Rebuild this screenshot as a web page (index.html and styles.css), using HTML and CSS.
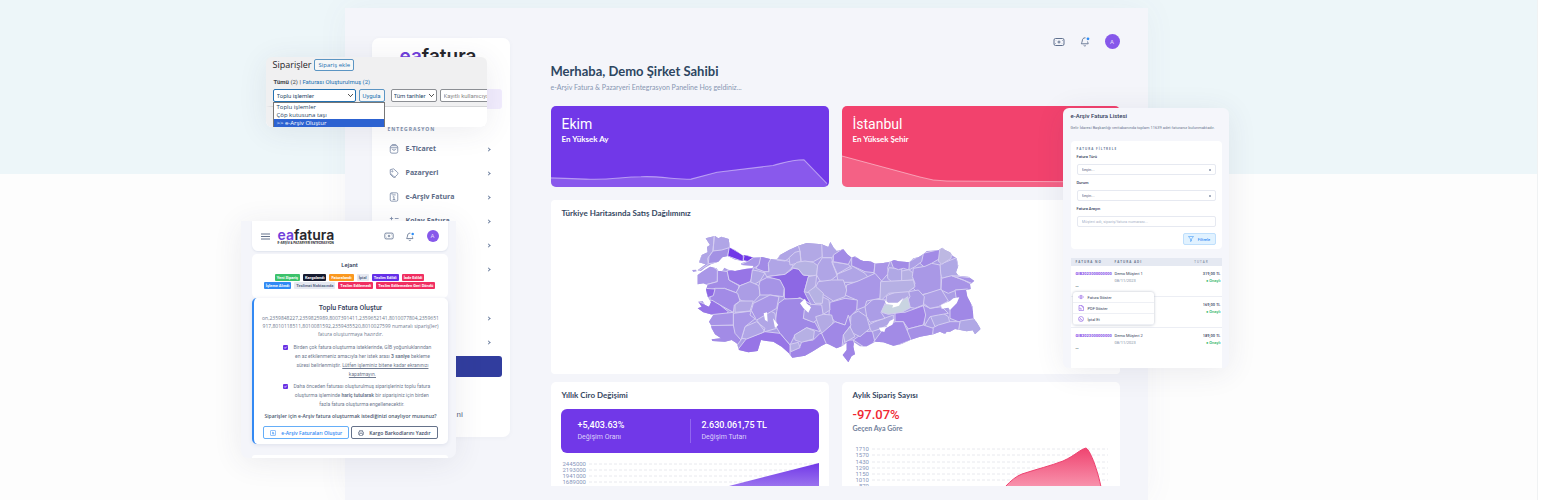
FILE: index.html
```html
<!DOCTYPE html>
<html lang="tr">
<head>
<meta charset="utf-8">
<meta name="viewport" content="width=device-width, initial-scale=1">
<title>eafatura</title>
<link rel="stylesheet" href="styles.css">
</head>
<body>
<svg class="defs" aria-hidden="true">
  <symbol id="i-cash" viewBox="0 0 24 18"><rect x="2" y="2" width="20" height="14" rx="3"/><circle cx="12" cy="9" r="2"/><path d="M6 6v.5M18 11.500v.5M5 12h1M18 6h1"/></symbol>
  <symbol id="i-bell" viewBox="0 0 24 24"><path d="M13 4c-5-.5-7 3-7 7 0 3-2 3.500-2 6h15c0-2-1.500-3-1.500-5M9 20.500c1 1.500 4 1.500 5 0"/><circle class="dot" cx="18.500" cy="6" r="3"/></symbol>
  <symbol id="i-check" viewBox="0 0 12 12"><path d="M3 6l2 2 4-4"/></symbol>
</svg>
<main class="hero">
  <div class="stage">
    <section class="dashboard">
      <aside class="sidebar">
        <div class="logo logo-lg"><span>ea</span>fatura</div>
        <div class="active-item"></div>
        <h2 class="side-head">ENTEGRASYON</h2>
        <nav class="side-nav">
          <a href="#"><svg class="ico" viewBox="0 0 24 24"><rect x="3" y="4" width="18" height="18" rx="4"/><path d="M3 9h18M6 4l2-3h8l2 3M8 12c1 4 7 4 8 0"/></svg><span>E-Ticaret</span><i class="chev"></i></a>
          <a href="#"><svg class="ico" viewBox="0 0 24 24"><path d="M3 4l8-2 9 8c2 2 2 4 0 6l-4 4c-2 2-4 1-5 0l-8-8z"/><circle cx="8" cy="8" r="1.500"/><path d="M2 14l8 8c2 1 4 1 6 0"/></svg><span>Pazaryeri</span><i class="chev"></i></a>
          <a href="#"><svg class="ico" viewBox="0 0 24 24"><rect x="3" y="2" width="18" height="20" rx="3"/><path d="M8 7h8M12 11v7M9 12l3-1M9 18h6M7 2v4"/></svg><span>e-Arşiv Fatura</span><i class="chev"></i></a>
          <a href="#"><svg class="ico" viewBox="0 0 24 24"><path d="M2 6h8M6 2v8M14 6h9M3 15l6 6M9 15l-6 6M14 16h9M14 20h9"/></svg><span>Kolay Fatura</span><i class="chev"></i></a>
          <a href="#" aria-label="Menü"><i class="chev"></i></a>
          <a href="#" aria-label="Menü"><i class="chev"></i></a>
        </nav>
        <nav class="side-nav side-nav-2">
          <a href="#" aria-label="Menü"><i class="chev"></i></a>
          <a href="#" aria-label="Menü"><i class="chev"></i></a>
        </nav>
        <div class="side-cta"></div>
        <p class="side-foot">ni</p>
      </aside>
      <div class="content">
        <header class="topbar">
          <svg class="t-cash"><use href="#i-cash"/></svg>
          <svg class="t-bell"><use href="#i-bell"/></svg>
          <span class="avatar">A</span>
        </header>
        <h1 class="hello">Merhaba, Demo Şirket Sahibi</h1>
        <p class="lead">e-Arşiv Fatura &amp; Pazaryeri Entegrasyon Paneline Hoş geldiniz...</p>
        <div class="pair">
          <article class="stat violet">
            <h2>Ekim</h2><p>En Yüksek Ay</p>
            <svg viewBox="0 0 278 30" preserveAspectRatio="none"><path class="fill" d="M0 22L35 23C60 24 70 21 90 21C110 20 125 24 140 23L166 17L222 11C235 8 240 6 253 6L276 27V30H0z"/><path class="line" d="M0 22L35 23C60 24 70 21 90 21C110 20 125 24 140 23L166 17L222 11C235 8 240 6 253 6L276 27"/></svg>
          </article>
          <article class="stat rose">
            <h2>İstanbul</h2><p>En Yüksek Şehir</p>
            <svg viewBox="0 0 278 34" preserveAspectRatio="none"><path class="fill" d="M0 3L78 24Q91 28 105 28L278 29V34H0z"/><path class="line" d="M0 3L78 24Q91 28 105 28L278 29"/></svg>
          </article>
        </div>
        <section class="panel map-panel">
          <h2>Türkiye Haritasında Satış Dağılımınız</h2>
          <svg class="map" viewBox="0 0 903 435" role="img" aria-label="Türkiye haritası">
            <defs><clipPath id="land">
              <path d="M62 40L90 33 100 40 110 35 131 42 135 68 150 75 174 92 176 108 150 104 128 93 112 97 100 110 78 118 60 128 48 138 38 136 62 118 42 112 50 90 68 82 66 66 75 60z"/>
              <path d="M21 135l12-1 2 5-10 2z"/>
              <path d="M38 178L38 150 55 138 75 125 95 130 100 138 112 138 118 128 130 134 150 138 180 132 205 128 205 122 170 120 168 115 190 108 176 106 176 90 190 92 205 98 230 96 255 102 275 104 285 90 312 75 340 62 365 54 410 58 430 66 436 51 446 68 455 78 475 73 487 88 500 98 510 94 525 104 535 108 555 108 570 116 595 114 615 110 628 105 640 109 673 112 685 100 700 97 715 88 725 78 760 76 772 68 780 75 795 82 803 92 815 100 820 122 813 142 820 152 850 155 868 168 855 178 857 192 843 195 847 215 863 245 865 280 875 292 887 312 870 328 863 316 845 319 825 315 810 312 795 320 785 320 780 327 765 320 745 328 705 335 675 345 650 357 625 362 595 352 570 350 545 364 525 364 507 352 505 365 510 388 500 393 490 412 473 390 485 375 485 352 473 362 455 370 440 362 425 355 410 362 385 378 360 392 322 398 312 385 290 365 265 350 245 348 228 345 218 378 190 382 162 375 155 355 140 345 120 350 82 348 80 343 108 340 90 328 80 310 78 300 72 290 85 270 55 262 38 250 50 245 40 230 53 228 60 240 72 245 78 232 68 215 63 195 68 180 55 175z"/>
            </clipPath></defs>
            <g class="prov" clip-path="url(#land)">
              <rect width="903" height="435" fill="#ab9ee5"/>
              <path fill="#b0a5e6" d="M88 30L135 40 133 70 110 80 84 78zM60 35L88 30 84 78 68 100 70 118 36 140 40 115 50 88z"/>
              <path fill="#a391e4" d="M84 78L110 75 133 68 128 95 100 112 70 116 72 95z"/>
              <path fill="#7138e8" d="M133 66L177 92 174 110 128 93zM175 88L206 97 195 112 175 108z"/>
              <path fill="#a997e7" d="M206 97L228 96 225 118 206 130 165 120 190 108zM30 150L78 122 98 135 97 170 60 180 35 180z"/>
              <path fill="#a28be6" d="M97 135L128 140 132 165 162 182 158 205 118 190 90 195 62 195 60 180 97 170zM228 92L258 100 250 120 252 142 238 140 212 130 222 118z"/>
              <path fill="#9775e6" d="M126 136L205 128 200 160 195 172 165 182 132 165z"/>
              <path fill="#b0a6e6" d="M202 135L220 138 240 144 225 168 205 180 197 172z"/>
              <path fill="#ab9de5" d="M165 182L195 170 222 182 225 210 205 232 170 228 150 208z"/>
              <path fill="#a694e6" d="M225 168L245 158 285 160 298 190 295 215 255 210 225 210 222 182z"/>
              <path fill="#b0a5e6" d="M250 115L258 100 275 103 310 108 325 125 300 148 245 155 238 140 252 140zM275 105L290 80 340 60 345 78 330 85 312 100 300 108z"/>
              <path fill="#8d68e4" d="M245 155L300 148 325 130 340 132 355 150 372 152 365 175 358 200 365 215 378 238 345 218 318 228 298 220 298 190 285 165z"/>
              <path fill="#b2a8e5" d="M340 60L365 50 412 55 412 95 385 110 348 112 345 78zM312 98L330 82 345 78 348 108 335 115 315 120z"/>
              <path fill="#b6b2e3" d="M335 112L360 108 385 112 398 122 395 152 372 152 355 150 340 132 320 128z"/>
              <path fill="#b0a5e6" d="M410 55L436 48 462 82 440 98 412 98zM412 98L440 98 445 120 458 150 430 172 405 168 395 150 398 120zM440 110L490 118 500 130 455 148zM455 148L500 122 540 145 550 158 510 172 460 172z"/>
              <path fill="#a28be6" d="M445 90L475 70 500 98 490 118 445 110zM500 92L525 100 570 112 567 143 540 140 500 122z"/>
              <path fill="#a995e7" d="M570 112L615 110 608 128 610 145 590 168 575 160 567 148z"/>
              <path fill="#b0a8e5" d="M612 128L650 132 650 168 620 170 608 160 608 145zM765 118L815 98 825 152 790 155 770 160 765 140z"/>
              <path fill="#a28be6" d="M615 102L676 110 672 135 655 130 640 134 625 128zM710 86L770 72 765 100 740 115 720 128 705 115z"/>
              <path fill="#b6b0e3" d="M650 138L672 134 685 145 685 165 650 168z"/>
              <path fill="#ada0e6" d="M673 110L715 86 710 110 690 125 672 135z"/>
              <path fill="#bdb8e2" d="M765 66L800 80 798 100 770 118 760 108z"/>
              <path fill="#a998e6" d="M685 130L720 124 740 115 765 120 768 155 768 195 730 205 705 210 685 190 690 175 682 155z"/>
              <path fill="#a793e6" d="M800 152L875 160 860 178 835 165zM770 160L800 152 835 165 860 175 860 195 815 195 790 205 768 195z"/>
              <path fill="#a088e6" d="M810 195L848 192 872 285 825 292 795 280 795 250 815 230z"/>
              <path fill="#b0a8e5" d="M825 288L875 280 895 320 860 335 820 318zM735 270L770 262 790 275 795 295 750 305z"/>
              <path fill="#a997e7" d="M740 310L760 300 795 290 825 290 820 320 745 332zM715 240L735 250 770 245 790 265 760 270 735 275 720 300 715 270z"/>
              <path fill="#aea0e6" d="M712 210L768 192 790 228 760 245 735 250 715 235z"/>
              <path fill="#ab9de5" d="M672 200L700 195 718 215 715 240 690 250 665 245z"/>
              <path fill="#a084e6" d="M630 262L660 262 715 242 722 270 715 300 670 312 655 290 630 290z"/>
              <path fill="#a590e6" d="M668 312L715 300 745 310 742 332 665 350z"/>
              <path fill="#a28be6" d="M565 352L590 318 630 290 655 290 668 320 678 345 620 368zM505 345L540 320 562 318 570 352 540 368z"/>
              <path fill="#b0a6e5" d="M550 300L570 290 625 270 625 290 590 310 560 320z"/>
              <path fill="#b3aae4" d="M605 212L640 198 670 198 675 215 660 240 602 235z"/>
              <path fill="#c9d4e1" d="M588 240L610 238 640 235 668 215 676 248 650 262 610 268 590 262z"/>
              <path fill="#ab9de6" d="M540 245L565 222 605 225 588 262 600 280 555 292 545 275z"/>
              <path fill="#a997e7" d="M485 180L520 168 570 145 590 168 585 220 545 228 540 245 515 255 515 225 480 210z"/>
              <path fill="#b6b0e4" d="M587 170L685 165 690 185 670 200 610 205 590 225 585 220z"/>
              <path fill="#ab9fe5" d="M498 270L520 258 545 275 555 310 525 335 495 320z"/>
              <path fill="#a28be6" d="M435 232L480 220 517 225 515 255 490 280 480 300 450 290 432 270z"/>
              <path fill="#b0a5e5" d="M400 170L440 165 475 165 485 195 480 215 445 228 420 212 390 190z"/>
              <path fill="#b3aae4" d="M370 155L395 150 392 180 378 205 358 200zM412 215L432 225 435 255 415 268 405 240z"/>
              <path fill="#b6b2e3" d="M370 200L392 184 415 205 412 235 390 235z"/>
              <path fill="#9f88e6" d="M280 235L298 222 345 220 378 238 370 262 355 280 390 292 405 320 365 308 330 330 315 360 285 325 270 300 275 260z"/>
              <path fill="#ab9de5" d="M358 255L378 238 410 240 415 272 385 292 355 280z"/>
              <path fill="#b3aae4" d="M392 275L415 268 440 270 445 290 430 320 410 325 400 300z"/>
              <path fill="#9f85e6" d="M312 400L315 378 345 365 350 350 385 345 405 325 425 330 435 355 380 405zM480 345L505 345 520 395 490 420 465 395z"/>
              <path fill="#b6b0e4" d="M328 330L365 308 388 318 385 342 350 352 330 345zM315 358L340 352 345 368 318 380z"/>
              <path fill="#a088e6" d="M410 325L450 290 480 300 490 270 498 300 475 330 470 375 430 370z"/>
              <path fill="#b3aae4" d="M475 330L495 305 510 335 480 352z"/>
              <path fill="#9775e6" d="M150 385L185 340 240 320 285 325 315 360 315 400 230 350 222 388z"/>
              <path fill="#b0a5e6" d="M212 280L250 255 270 265 275 310 240 320 225 300zM170 340L180 305 215 290 240 310 235 322 185 342z"/>
              <path fill="#a997e7" d="M205 235L255 210 282 215 275 250 215 285 195 270zM145 265L200 258 212 280 180 305 168 345 145 325z"/>
              <path fill="#b3a8e5" d="M150 240L165 228 205 228 195 258 150 262z"/>
              <path fill="#a28be6" d="M75 195L90 190 118 190 158 205 165 228 148 240 145 262 105 240 75 225zM75 300L145 300 150 325 168 345 155 362 75 355z"/>
              <path fill="#9775e6" d="M30 225L65 240 80 225 105 240 130 260 120 270 90 272 30 268z"/>
              <path fill="#8d68e4" d="M60 190L90 192 85 212 68 218z"/>
              <path fill="#a793e6" d="M70 270L145 262 145 300 70 302z"/>
            </g>
            <path class="lake" d="M345 235l15-14 5 14 13 12-8 16-15-14zM236 265l10-3 2 28-8-5zM264 280l16 20-10 9zM768 240l27-12 10-8 18-3-8 18-20 20-5-7-20 3zM582 308l22-2 10-18 14-7-6 18-20 10-4 12-12-4zM598 224l12 9 28 0 18-15-14 24-20 6 2-8-20-3z"/>
          </svg>
        </section>
        <div class="pair pair-low">
          <section class="panel">
            <h2>Yıllık Ciro Değişimi</h2>
            <div class="ciro">
              <p><b>+5,403.63%</b>Değişim Oranı</p>
              <p><b>2.630.061,75 TL</b>Değişim Tutarı</p>
            </div>
            <svg class="chart" viewBox="0 0 258 28">
              <defs><linearGradient id="gv" x2="0" y2="1"><stop stop-color="#7138e8"/><stop offset="1" stop-color="#9a72ee"/></linearGradient></defs>
              <path class="grid" d="M28 6H258M28 12H258M28 18H258M28 24H258"/>
              <path fill="url(#gv)" d="M168 28L258 5V28z"/>
              <g text-anchor="end"><text x="25" y="8">2445000</text><text x="25" y="14">2193000</text><text x="25" y="20">1941000</text><text x="25" y="26">1689000</text></g>
            </svg>
          </section>
          <section class="panel">
            <h2>Aylık Sipariş Sayısı</h2>
            <p class="drop">-97.07%</p>
            <p class="drop-sub">Geçen Aya Göre</p>
            <svg class="chart" viewBox="0 0 258 44">
              <defs><linearGradient id="gr" x2="0" y2="1"><stop stop-color="#ef4470"/><stop offset="1" stop-color="#f893ad"/></linearGradient></defs>
              <path class="grid" d="M20 7H256M20 13H256M20 20H256M20 26H256M20 32H256M20 38H256"/>
              <path fill="url(#gr)" stroke="#ee4270" d="M153 45Q162 35 170 32C185 27 198 24 211 19C224 13 227 8 234 6C239 9 246 30 249 45z"/>
              <g text-anchor="end"><text x="17" y="9">1710</text><text x="17" y="15">1570</text><text x="17" y="22">1430</text><text x="17" y="28">1290</text><text x="17" y="34">1150</text><text x="17" y="40">1010</text><text x="17" y="46">870</text></g>
            </svg>
          </section>
        </div>
      </div>
    </section>

    <section class="float orders">
      <div class="orders-head"><h2>Siparişler</h2><button>Sipariş ekle</button></div>
      <p class="orders-links"><b>Tümü</b> (2) | <a href="#">Faturası Oluşturulmuş (2)</a></p>
      <div class="orders-tools">
        <select class="bulk" aria-label="Toplu işlemler"><option>Toplu işlemler</option></select>
        <button>Uygula</button>
        <select class="dates" aria-label="Tarihler"><option>Tüm tarihler</option></select>
        <input type="text" aria-label="Kullanıcı" placeholder="Kayıtlı kullanıcıya göre">
      </div>
      <div class="orders-body">
        <ul class="menu"><li>Toplu işlemler</li><li>Çöp kutusuna taşı</li><li class="on">&gt;&gt; e-Arşiv Oluştur</li></ul>
      </div>
    </section>

    <section class="float bulk-card">
      <header class="mob-head">
        <svg class="burger" viewBox="0 0 9 7"><path d="M0 1h9M0 3.500h9M0 6h9"/></svg>
        <div class="logo logo-sm"><div><span>ea</span>fatura</div><small>E-ARŞİV &amp; PAZARYERİ ENTEGRASYON</small></div>
        <svg class="t-cash"><use href="#i-cash"/></svg>
        <svg class="t-bell"><use href="#i-bell"/></svg>
        <span class="avatar">A</span>
      </header>
      <div class="legend">
        <h3>Lejant</h3>
        <p><span class="g">Yeni Sipariş</span><span class="k">Kargolandı</span><span class="o">Faturalandı</span><span class="n">İptal</span><span class="v">Teslim Edildi</span><span class="r">İade Edildi</span></p>
        <p><span class="b">İşleme Alındı</span><span class="n">Teslimat Noktasında</span><span class="r">Teslim Edilemedi</span><span class="r">Teslim Edilemeden Geri Döndü</span></p>
      </div>
      <div class="confirm">
        <h3>Toplu Fatura Oluştur</h3>
        <p class="ids">on,2359848227,2359825989,8007391411,2359652141,8010077804,2359651<br>917,8010118511,8010081592,2359435520,8010027599 numaralı sipariş(ler)<br>fatura oluşturmaya hazırdır.</p>
        <ul>
          <li><svg><use href="#i-check"/></svg><span>Birden çok fatura oluşturma isteklerinde, GİB yoğunluklarından<br>en az etkilenmeniz amacıyla her istek arası <b>3 saniye</b> bekleme<br>süresi belirlenmiştir. <u>Lütfen işleminiz bitene kadar ekranınızı<br>kapatmayın.</u></span></li>
          <li><svg><use href="#i-check"/></svg><span>Daha önceden faturası oluşturulmuş siparişleriniz toplu fatura<br>oluşturma işleminde <b>hariç tutularak</b> bir siparişiniz için birden<br>fazla fatura oluşturma engellenecektir.</span></li>
        </ul>
        <p class="ask">Siparişler için e-Arşiv fatura oluşturmak istediğinizi onaylıyor musunuz?</p>
        <div class="actions">
          <button class="blue"><svg viewBox="0 0 12 12"><rect x="1" y="1" width="10" height="10" rx="1"/><path d="M4 4h1v4h4M7 4v4"/></svg>e-Arşiv Faturaları Oluştur</button>
          <button><svg viewBox="0 0 12 12"><path d="M3 4V1h6v3M3 9H1V4h10v5H9M3 7h6v4H3z"/></svg>Kargo Barkodlarını Yazdır</button>
        </div>
      </div>
      <div class="next"></div>
    </section>

    <section class="float list-card">
      <h2>e-Arşiv Fatura Listesi</h2>
      <p class="note">Gelir İdaresi Başkanlığı veritabanında toplam 11639 adet faturanız bulunmaktadır.</p>
      <form class="filter">
        <h3>FATURA FİLTRELE</h3>
        <label for="f1">Fatura Türü</label><select id="f1"><option>Seçin...</option></select>
        <label for="f2">Durum</label><select id="f2"><option>Seçin...</option></select>
        <label for="f3">Fatura Arayın</label><input id="f3" type="text" placeholder="Müşteri adı, sipariş/fatura numarası...">
        <button type="button"><svg viewBox="0 0 12 12"><path d="M1 1h10L7 6v4L5 11V6z"/></svg>Filtrele</button>
      </form>
      <table>
        <thead><tr><th>FATURA NO</th><th>FATURA ADI</th><th class="amt">TUTAR</th></tr></thead>
        <tbody>
          <tr><td><a href="#">GIB2023000000000</a><em>•••</em></td><td>Demo Müşteri 1<small>08/11/2023</small></td><td class="amt">319,00 TL<small>● Onaylı</small></td></tr>
          <tr><td></td><td></td><td class="amt">169,00 TL<small>● Onaylı</small></td></tr>
          <tr><td><a href="#">GIB2023000000000</a><em>•••</em></td><td>Demo Müşteri 2<small>08/11/2023</small></td><td class="amt">189,00 TL<small>● Onaylı</small></td></tr>
        </tbody>
      </table>
      <ul class="popup">
        <li><svg viewBox="0 0 12 12"><path d="M1 6q5-7 10 0q-5 7-10 0z"/><circle cx="6" cy="6" r="1.500"/></svg>Fatura Göster</li>
        <li><svg viewBox="0 0 12 12"><path d="M2 1h6l3 3v7H2zM4 8h4M8 1v3h3M4 5v3"/></svg>PDF Göster</li>
        <li><svg viewBox="0 0 12 12"><circle cx="6" cy="6" r="5"/><path d="M3 3l6 6M3 6l3 3"/></svg>İptal Et</li>
      </ul>
    </section>
  </div>
</main>
</body>
</html>
```
FILE: styles.css
```css
* { box-sizing: border-box; }
body { margin: 0; background: #fff; font-family: Roboto, "Open Sans", sans-serif; color: #34405a; }
h1, h2, h3, p, ul { margin: 0; padding: 0; }
ul { list-style: none; }
a { text-decoration: none; color: inherit; }
button, input, select { font: inherit; margin: 0; padding: 0; min-width: 0; }
.defs { position: absolute; width: 0; height: 0; }

.hero { min-height: 100vh; margin-right: 6px; overflow: hidden; background: linear-gradient(#edf6f9 174px, #fdfdfd 174px); border-right: 1px solid #f0f2f3; }
.stage { position: relative; max-width: 1058px; margin: 0 auto; padding: 8px 150px 0 105px; }
.float { position: absolute; overflow: hidden; box-shadow: 0 4px 30px rgba(60, 60, 90, .09); }

.dashboard { display: grid; grid-template-columns: 138px minmax(0, 1fr); gap: 41px; align-items: start; padding: 26px 28px 14px 27px; background: #f4f5fa; box-shadow: 0 0 30px rgba(90, 100, 130, .05); }
.sidebar { margin-top: 4px; padding: 7px 8px 17px 16px; background: #fff; border-radius: 7px; box-shadow: 0 1px 5px rgba(60, 70, 110, .04); }
.logo { font-family: Inter, sans-serif; font-weight: 600; color: #26262c; }
.logo span { color: #713fdb; }
.logo-lg { padding-left: 12px; font-size: 19px; line-height: 24px; }
.active-item { height: 20px; margin: 20px 0 15px; background: #f2edfe; border-radius: 3px; }
.side-head { font: bold 5px/10px "Open Sans", sans-serif; letter-spacing: 1px; color: #8090ac; }
.side-nav { padding-top: 3px; }
.side-nav a { display: flex; align-items: center; height: 24px; gap: 6px; padding-right: 12px; font: bold 7px/10px "Open Sans", sans-serif; color: #5c6b87; }
.side-nav-2 { padding-top: 25px; }
.ico { width: 12px; height: 10px; fill: none; stroke: #7a89a6; stroke-width: 2; }
.chev { width: 3px; height: 3px; margin-left: auto; border: solid #6f81a0; border-width: 1px 1px 0 0; transform: rotate(45deg); }
.side-cta { height: 21px; margin-top: 2px; background: #313d9e; border-radius: 3px; }
.side-foot { margin-top: 33px; padding-left: 69px; font-size: 8px; line-height: 10px; color: #5c6b87; }

.topbar { display: flex; justify-content: flex-end; align-items: center; gap: 14px; }
.t-cash, .t-bell { width: 12px; height: 10px; fill: none; stroke: #60718f; stroke-width: 2; }
.t-bell { height: 11px; }
.dot { fill: #2c8cf5; stroke: none; }
.avatar { display: grid; place-items: center; width: 15px; height: 15px; border-radius: 50%; background: #8658ea; color: #e5dafc; font-size: 6px; line-height: 8px; }
.hello { margin-top: 14px; font: bold 13px/16px Lato, sans-serif; color: #2d4661; }
.lead { margin-top: 3px; font: 7px/10px Lato, sans-serif; color: #8796b2; }
.pair { display: grid; grid-template-columns: 1fr 1fr; gap: 13px; margin-top: 14px; }
.stat { display: flex; flex-direction: column; overflow: hidden; border-radius: 5px; padding-top: 10px; color: #fff; }
.stat h2 { padding-left: 11px; font-weight: normal; font-size: 14px; line-height: 17px; }
.stat p { padding-left: 11px; font: bold 8px/12px Lato, sans-serif; }
.stat svg { display: block; width: 100%; height: 34px; margin-top: 8px; }
.violet { background: #7138e8; }
.rose { background: #f2426d; }
.stat .fill { fill: rgba(255, 255, 255, .17); }
.stat .line { fill: none; stroke: rgba(255, 255, 255, .45); }
.panel { background: #fff; padding: 8px 10px 4px; border-radius: 4px; }
.panel h2 { padding-left: 1px; font: bold 8px/11px Lato, sans-serif; color: #354761; }
.map-panel { margin-top: 13px; }
.map { display: block; width: 301px; height: 145px; margin: 6px auto 0; }
.prov path { stroke: #d4cdf1; stroke-width: 3; stroke-linejoin: round; }
.lake { fill: #fff; }
.pair-low { margin-top: 8px; }
.pair-low .panel { padding-bottom: 0; border-radius: 5px 5px 0 0; }
.ciro { display: grid; grid-template-columns: 1fr 1fr; margin-top: 8px; padding: 10px 0; border-radius: 6px; background: #7138e8; color: #ddd0fa; font-size: 7px; line-height: 11px; }
.ciro p { padding-left: 17px; }
.ciro p + p { padding-left: 11px; border-left: 1px solid #9166ef; }
.ciro b { display: block; font-size: 9px; line-height: 13px; font-weight: 500; color: #fff; }
.chart { display: block; width: 100%; height: auto; overflow: hidden; margin-top: 5px; fill: #8795bb; font-size: 6px; }
.grid { stroke: #e8e9ee; stroke-width: 1; stroke-dasharray: 3 2; }
.drop { margin-top: 6px; padding-left: 1px; font-size: 13px; line-height: 16px; font-weight: 500; color: #f02733; }
.drop-sub { padding-left: 1px; font: bold 7px/10px Lato, sans-serif; color: #71809b; }
.drop-sub + .chart { margin-top: 9px; }

.orders { left: 26px; top: 57px; width: 221px; border-radius: 6px; background: #f0f0f1; font: 6px/8px "Open Sans", sans-serif; color: #3c434a; }
.orders-head { display: flex; align-items: center; gap: 3px; padding: 2px 7px 0; }
.orders h2 { font-weight: normal; font-size: 9px; line-height: 12px; color: #1d2327; }
.orders button { height: 12px; padding: 0 3px; border: 1px solid #5b95c3; border-radius: 2px; background: #f6f7f7; color: #2271b1; }
.orders-links { padding: 7px 8px 3px; font-family: Roboto, sans-serif; }
.orders-links, .orders-tools { white-space: nowrap; }
.orders-links a { color: #2271b1; }
.orders-tools { display: flex; gap: 3px; padding-left: 7px; font-family: Roboto, sans-serif; }
.orders-tools > * { height: 13px !important; flex: none; }
.orders-tools button { width: 26px; }
.orders-tools select { padding-left: 3px; border: 1px solid #8c8f94; border-radius: 2px; appearance: none; color: #2c4a6a; background: linear-gradient(45deg, transparent 45%, #555 45% 65%, transparent 65%) right 4px top 4px / 3px 3px no-repeat, linear-gradient(-45deg, transparent 45%, #555 45% 65%, transparent 65%) right 2px top 4px / 3px 3px no-repeat, #fff; }
.orders-tools .bulk { width: 83px; border-color: #2271b1; }
.orders-tools .dates { width: 46px; margin-left: 3px; padding-left: 2px; }
.orders-tools input { width: 80px; padding-left: 3px; border: 1px solid #8c8f94; border-radius: 2px; background: #fff; }
.orders-tools input::placeholder { color: #888; }
.orders-body { margin-top: 4px; background: #fff; border-left: 7px solid #f0f0f1; border-top: 1px solid #d5d6d8; }
.menu { width: 112px; margin-top: -5px; background: #fff; border: 1px solid #777; border-bottom: 0; color: #26445f; }
.menu li { padding-left: 3px; }
.menu .on { background: #2c62d1; color: #fff; }

.bulk-card { left: 1px; top: 221px; width: 215px; padding: 0 8px 0 11px; background: #f4f5fa; border-radius: 0 0 7px 7px; }
.mob-head { display: flex; align-items: center; gap: 15px; height: 30px; padding: 0 9px; background: #fff; border-radius: 0 0 6px 6px; box-shadow: 0 1px 2px #dfe3ed; }
.burger { width: 9px; height: 7px; stroke: #65738c; stroke-width: 1; margin-right: -7px; }
.mob-head .t-cash { width: 10px; margin-left: auto; }
.mob-head .t-bell { width: 10px; margin-left: -4px; }
.mob-head .avatar { width: 12px; height: 12px; margin-left: -3px; }
.logo-sm { font-size: 14px; line-height: 14px; }
.logo-sm small { display: block; font: bold 3px/3px Inter, sans-serif; white-space: nowrap; }
.legend { margin-top: 3px; padding: 6px 0 8px; background: #fff; border-radius: 5px; text-align: center; }
.legend h3, .confirm h3 { font-weight: 500; font-size: 7px; line-height: 10px; }
.legend h3 { margin-bottom: 4px; font-size: 6px; }
.legend p { display: flex; justify-content: center; gap: 3px; padding-bottom: 1px; }
.legend span { padding: 0 2px; border-radius: 1px; font: bold 4px/7px Roboto, sans-serif; color: #fff; white-space: nowrap; }
.legend .g { background: #3dc26b; }
.legend .k { background: #171c30; }
.legend .o { background: #fa9820; }
.legend .n { background: #e5e8f1; color: #596784; }
.legend .v { background: #6530e8; }
.legend .r { background: #f02e61; }
.legend .b { background: #318af4; }
.confirm { padding: 5px 2px; border-left: 2px solid #3389f3; border-radius: 5px; background: #fff; box-shadow: 0 1px 4px #dde0eb; text-align: center; color: #707b90; }
.confirm h3 { color: #34405a; }
.ids { margin-top: 1px; font: 5px/8px "Open Sans", sans-serif; white-space: nowrap; }
.confirm ul { padding-top: 5px; }
.confirm li { display: flex; padding: 0 27px 3px; gap: 6px; font-size: 5px; line-height: 9px; white-space: nowrap; }
.confirm li span { flex: 1; }
.confirm li svg { flex: none; width: 5px; height: 5px; margin-top: 2px; border-radius: 1px; background: #6830e4; fill: none; stroke: #fff; stroke-width: 2; }
.ask { padding-bottom: 6px; font: 600 5px/8px "Open Sans", sans-serif; white-space: nowrap; color: #4b5770; }
.actions { display: flex; justify-content: center; gap: 2px; }
.actions button { display: flex; align-items: center; gap: 5px; height: 13px; padding: 0 6px; border: 1px solid #65728a; border-radius: 2px; background: #fff; color: #3f4d68; font: 600 5px/8px "Open Sans", sans-serif; white-space: nowrap; }
.actions .blue { border-color: #65aef8; color: #318af4; }
.actions svg, .filter button svg, .popup svg { width: 6px; height: 6px; fill: none; stroke: currentColor; stroke-width: 1; }
.next { height: 3px; margin-top: 11px; border-radius: 4px 4px 0 0; background: #fff; }

.list-card { left: 823px; top: 108px; width: 166px; padding: 4px 7px 0 8px; background: #f5f6fb; border-radius: 6px; font-size: 5px; line-height: 7px; }
.list-card h2 { font-weight: 500; font-size: 6px; line-height: 8px; }
.note { padding: 4px 0 10px; font-size: 4px; color: #6c7890; white-space: nowrap; }
.filter { display: flex; flex-direction: column; padding: 5px 6px 4px; background: #fff; border-radius: 4px; }
.filter h3 { margin-bottom: 1px; font: bold 3px/6px "Open Sans", sans-serif; letter-spacing: 1px; color: #6a7c99; }
.filter label { line-height: 8px; font-size: 4px; font-weight: 500; }
.filter select, .filter input { width: 100%; height: 11px; margin: 3px 0 4px; padding-left: 4px; border: 1px solid #e6e9f1; border-radius: 2px; appearance: none; font-size: 4px; color: #59657c; background: #fff; }
.filter select { background: radial-gradient(circle, #a6afc0 1px, transparent 1px) right 3px center / 4px 4px no-repeat; }
.filter input::placeholder { color: #a9b3c8; }
.filter button { display: flex; align-items: center; justify-content: center; gap: 4px; align-self: flex-end; width: 33px; height: 12px; margin-top: 2px; border: 1px solid #bfdffc; border-radius: 2px; background: #e1f2ff; color: #2c8cf5; font-size: 4px; font-weight: 500; }
table { width: 100%; margin-top: 9px; border-spacing: 0; background: #fff; font-size: 4px; line-height: 7px; table-layout: fixed; }
th { padding: 0; height: 8px; text-align: left; font: bold 3px/8px "Open Sans", sans-serif; letter-spacing: 1px; background: #e5e9f2; color: #68758d; white-space: nowrap; }
th:first-child, td:first-child { width: 44px; padding-left: 5px; }
td { height: 31px; padding: 4px 0 0; vertical-align: top; border-bottom: 1px solid #eceef4; white-space: nowrap; }
td a { color: #8449e8; font-weight: bold; }
td em { display: block; padding-top: 7px; font-size: 3px; font-style: normal; }
td small { display: block; font-size: 4px; color: #8490a5; }
.amt { width: 40px; text-align: right; padding-right: 1px; font-weight: 500; }
.amt small { color: #29b466; }
th.amt { padding-right: 13px; }
tr:last-child td { height: 40px; border: 0; }
.popup { position: absolute; left: 10px; top: 184px; width: 81px; border-radius: 3px; background: #fff; box-shadow: 0 0 3px #b8bdca; font-size: 4px; }
.popup li { display: flex; align-items: center; height: 11px; gap: 4px; padding-left: 5px; border-bottom: 1px solid #eef0f5; }
.popup svg { color: #7a42df; }
```
